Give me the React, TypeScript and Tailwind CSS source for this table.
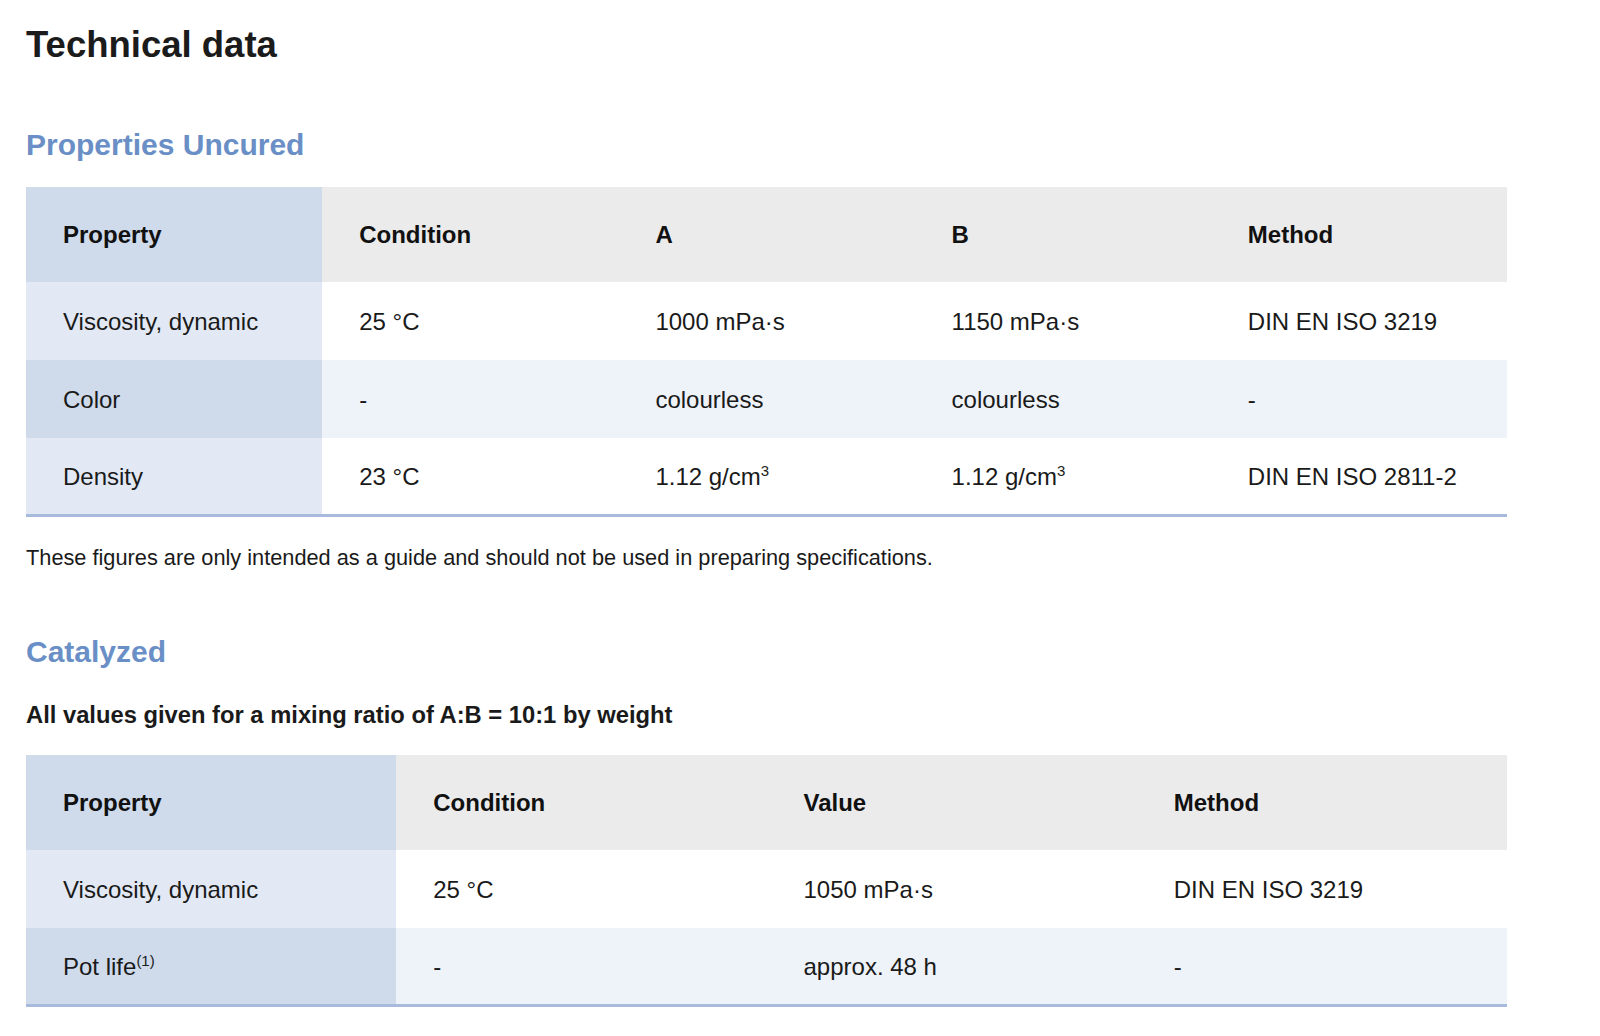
import React from "react";

const font = { fontFamily: '"Liberation Sans", Arial, sans-serif' };

type Cell = React.ReactNode;

function DataTable({ headers, rows, cols }: { headers: string[]; rows: Cell[][]; cols: string }) {
  return (
    <div className="w-[1481px] border-b-[3px] border-[#a9bbdc]">
      <div className={`grid ${cols}`}>
        {headers.map((h, i) => (
          <div
            key={i}
            className={`h-[95px] flex items-center pl-[37px] pt-[1px] text-[24px] font-bold text-[#111] ${i === 0 ? "bg-[#cfdaeb]" : "bg-[#ebebeb]"}`}
          >
            {h}
          </div>
        ))}
      </div>
      {rows.map((r, ri) => (
        <div key={ri} className={`grid ${cols}`}>
          {r.map((c, ci) => {
            const alt = ri % 2 === 1;
            const bg = ci === 0 ? (alt ? "bg-[#cfdaeb]" : "bg-[#e2e9f5]") : alt ? "bg-[#eef2f9]" : "bg-white";
            return (
              <div
                key={ci}
                className={`${ri === rows.length - 1 ? "h-[76px]" : "h-[78px]"} flex items-center pl-[37px] pt-[2px] text-[24px] text-[#1a1a1a] ${bg}`}
              >
                <span>{c}</span>
              </div>
            );
          })}
        </div>
      ))}
    </div>
  );
}

const Sup = ({ children }: { children: React.ReactNode }) => (
  <sup className="text-[15px] relative -top-[9px]">{children}</sup>
);

export default function App() {
  return (
    <div className="w-[1600px] h-[1036px] bg-white overflow-hidden pl-[26px]" style={font}>
      <h1 className="pt-[26px] text-[36.5px] leading-[37px] font-bold text-[#1b1b1b]">Technical data</h1>
      <h2 className="mt-[67px] text-[30px] leading-[30px] font-bold text-[#6a8fc6]">Properties Uncured</h2>
      <div className="mt-[27px]">
        <DataTable
          cols="grid-cols-5"
          headers={["Property", "Condition", "A", "B", "Method"]}
          rows={[
            ["Viscosity, dynamic", "25 °C", "1000 mPa·s", "1150 mPa·s", "DIN EN ISO 3219"],
            ["Color", "-", "colourless", "colourless", "-"],
            [
              "Density",
              "23 °C",
              <>1.12 g/cm<Sup>3</Sup></>,
              <>1.12 g/cm<Sup>3</Sup></>,
              "DIN EN ISO 2811-2",
            ],
          ]}
        />
      </div>
      <p className="mt-[30px] text-[21.75px] leading-[22px] text-[#1a1a1a]">
        These figures are only intended as a guide and should not be used in preparing specifications.
      </p>
      <h2 className="mt-[68px] text-[30px] leading-[30px] font-bold text-[#6a8fc6]">Catalyzed</h2>
      <p className="mt-[36px] text-[23.75px] leading-[24px] font-bold text-[#1a1a1a]">
        All values given for a mixing ratio of A:B = 10:1 by weight
      </p>
      <div className="mt-[28px]">
        <DataTable
          cols="grid-cols-4"
          headers={["Property", "Condition", "Value", "Method"]}
          rows={[
            ["Viscosity, dynamic", "25 °C", "1050 mPa·s", "DIN EN ISO 3219"],
            [<>Pot life<Sup>(1)</Sup></>, "-", "approx. 48 h", "-"],
          ]}
        />
      </div>
    </div>
  );
}
